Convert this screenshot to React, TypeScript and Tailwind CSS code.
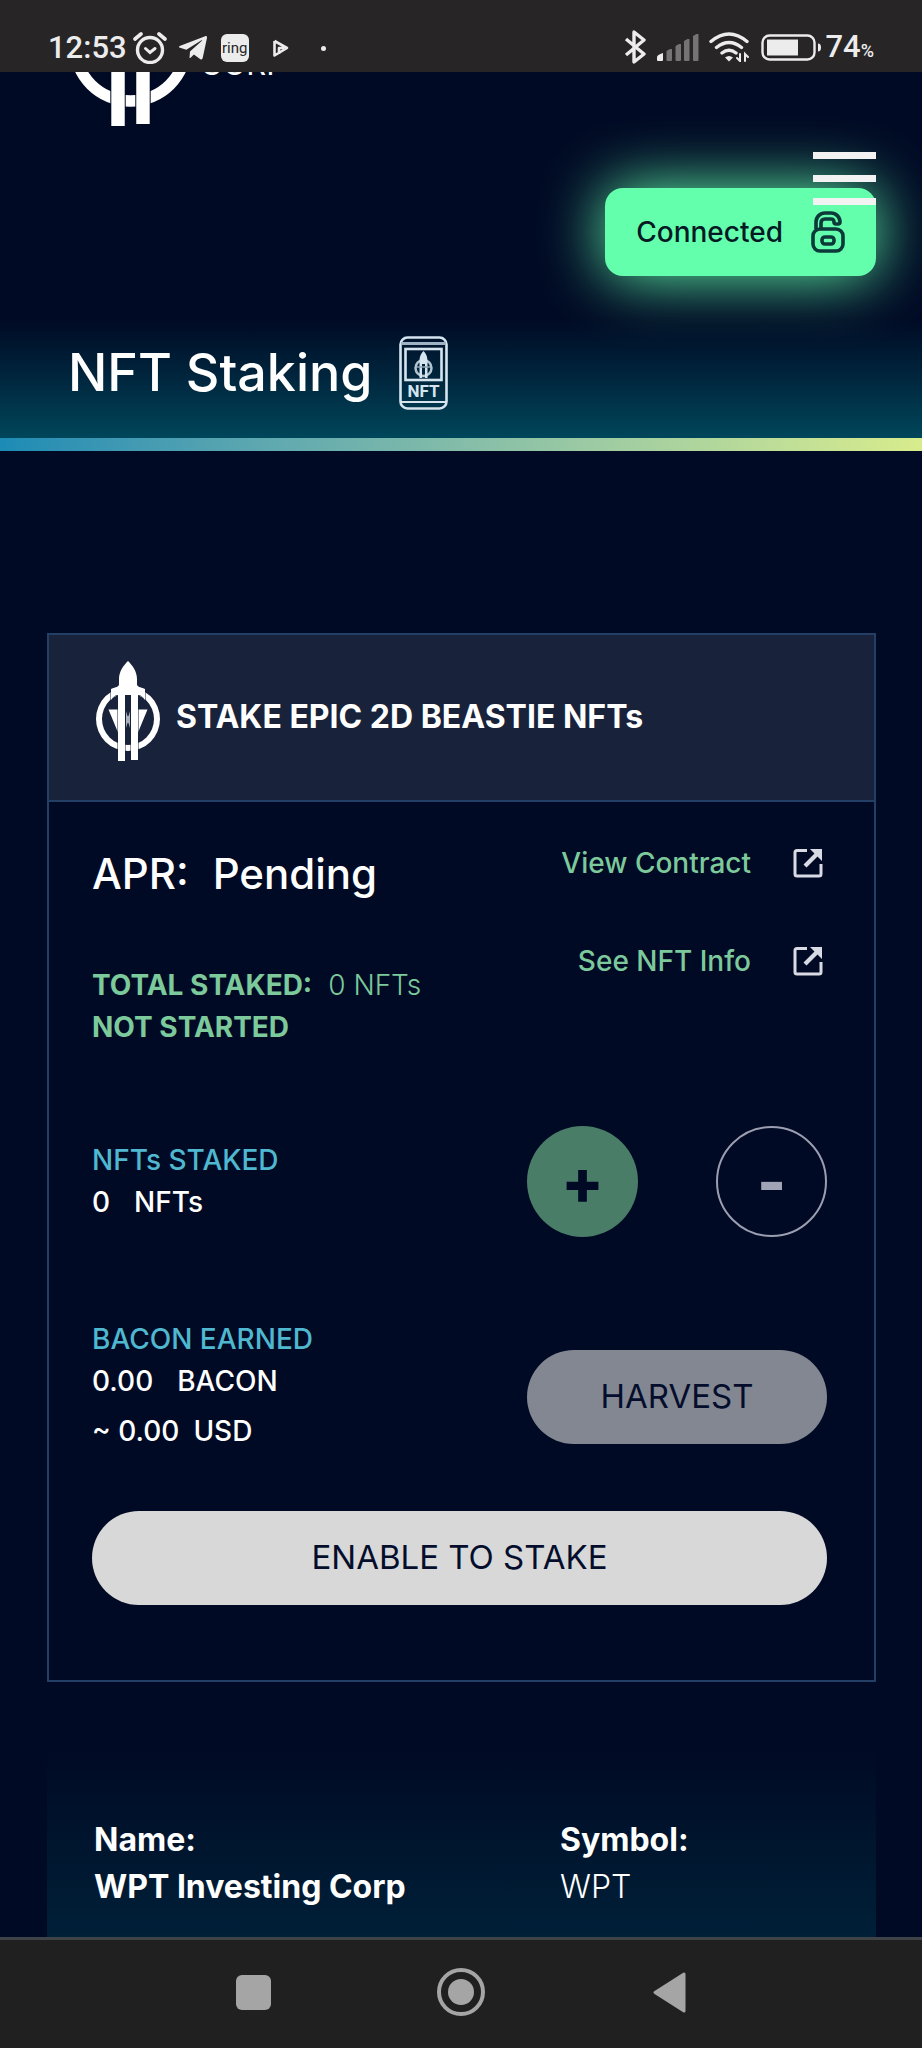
import { useState } from 'react';
import { FaTelegramPlane } from 'react-icons/fa';

const INFO = [
  { label: 'Name:', value: 'WPT Investing Corp', strong: true },
  { label: 'Symbol:', value: 'WPT', strong: false },
];

function RocketLogo({ className, gap }: { className?: string; gap: string }) {
  return (
    <svg viewBox="0 0 64 100" className={className} fill="#fff" aria-hidden="true">
      <path
        fillRule="evenodd"
        d="M32 26a32 32 0 1 1 0 64 32 32 0 0 1 0-64zm0 6a26 26 0 1 0 0 52 26 26 0 0 0 0-52z"
      />
      <path d="M12.500 48.500H22v23zM51.500 48.500H42v23z" />
      {/* keeps a thin dark line between the rocket and the ring */}
      <g fill={gap} stroke={gap} strokeWidth="1">
        <path d="M15 39V28c5-2 8-2 8-5v-5C23 10 28 4 32 0c4 4 9 10 9 18v5c0 3 3 3 8 5v11c-2-3-4-5-7-5H22c-3 0-5 2-7 5z" />
        <path d="M22 33h7v67h-7zM35 33h7v67h-7z" />
        <path d="M29 33h6v17h-6z" />
      </g>
      <path d="M30 50l1.500 5h1L34 50v17l-1.500-5h-1L30 67z" fill="#aab0bd" />
      <path d="M15 39V28c5-2 8-2 8-5v-5C23 10 28 4 32 0c4 4 9 10 9 18v5c0 3 3 3 8 5v11c-2-3-4-5-7-5H22c-3 0-5 2-7 5z" />
      <path d="M22 33h7v67h-7zM35 33h7v66h-7z" />
    </svg>
  );
}

function UnlockIcon() {
  return (
    <svg viewBox="0 0 34 42" className="h-[42px] w-[34px]" fill="none" stroke="#0b3a38" strokeWidth="3.600" strokeLinejoin="round" aria-hidden="true">
      <rect x="2" y="18" width="30" height="22" rx="7" />
      <path d="M5 18v-7a9 9 0 0 1 9-9h6a9 9 0 0 1 9 9q0 2-2 2h-2q-2 0-2-2 0-3-3-3h-6q-4 0-4 4v6" />
      <rect x="11" y="26" width="12" height="7" rx="3" />
    </svg>
  );
}

function NftCardIcon() {
  return (
    <svg viewBox="0 0 49 74" className="h-[74px] w-[49px]" fill="none" stroke="#d5e4ee" aria-hidden="true">
      <rect x="1.500" y="1.500" width="46" height="71" rx="7" strokeWidth="2.600" />
      <path d="M2 7.500h45" strokeWidth="3" stroke="#9fb3c4" />
      <path d="M2 66h45" strokeWidth="2" />
      <rect x="6.500" y="13" width="36" height="31" strokeWidth="2.600" />
      <circle cx="24.500" cy="32" r="8" strokeWidth="2.500" stroke="#b4c5d2" />
      <path d="M24.500 15c-4 4-4 8-4 12v15h2.500V28h3v14h2.500V27c0-4 0-8-4-12z" fill="#d5e4ee" stroke="none" />
      <path d="M18 31h13" strokeWidth="1.500" stroke="#8ea5b5" />
      <text x="24.500" y="61" textAnchor="middle" fontSize="17" fontWeight="700" fontFamily="Roboto, sans-serif" fill="#d5e4ee" stroke="none">
        NFT
      </text>
    </svg>
  );
}

function ExternalIcon() {
  return (
    <svg viewBox="0 0 30 30" className="h-[30px] w-[30px]" aria-hidden="true">
      <path d="M14 2.500H4q-2 0-2 2V26q0 2 2 2h22q2 0 2-2V16" fill="none" stroke="#d9dbe4" strokeWidth="3" />
      <path d="M17 1h12v12l-4.500-4.500L13.500 19.500l-3-3L21.500 5.500z" fill="#d9dbe4" />
    </svg>
  );
}

function StatusBar() {
  return (
    <div className="relative z-10 flex h-18 items-end justify-between bg-[#272526] px-12 pb-2 font-[Roboto,sans-serif] text-[#ececec]">
      <div className="flex items-center">
        <span className="text-[31px] leading-8 font-medium">12:53</span>
        <svg viewBox="0 0 34 32" className="ml-[6px] h-8 w-[34px]" fill="none" stroke="#ececec" strokeLinecap="round" aria-hidden="true">
          <circle cx="17" cy="18" r="12.500" strokeWidth="3.400" />
          <path d="M2 7l6-5M32 7l-6-5" strokeWidth="3.600" />
          <path d="M12.500 16.500l4.500 4 5-4" strokeWidth="3" />
        </svg>
        <FaTelegramPlane className="ml-3 h-8 w-7" />
        <span className="ml-[14px] flex h-7 w-7 items-center justify-center rounded-md bg-[#ececec] text-[15px] leading-7 text-[#272526]">
          ring
        </span>
        <svg viewBox="0 0 16 18" className="ml-6 h-[18px] w-4" fill="none" stroke="#ececec" strokeWidth="2.600" aria-hidden="true">
          <path d="M1.500 2v14.500L14 9 1.500 2M6 15V9h5" strokeLinejoin="round" />
        </svg>
        <span className="ml-8 h-[5px] w-[5px] rounded-full bg-[#ececec]" />
      </div>
      <div className="flex items-center">
        <svg viewBox="0 0 22 34" className="h-[34px] w-[22px]" fill="none" stroke="#ececec" strokeWidth="3.400" strokeLinejoin="round" aria-hidden="true">
          <path d="M2 9l18 15-10 8V2l10 8L2 25" />
        </svg>
        <svg viewBox="0 0 42 28" className="ml-[11px] h-7 w-[42px]" fill="#757374" aria-hidden="true">
          <path d="M0 27v-3q0-2 6-4v7q0 1-1 1H1q-1 0-1-1z" fill="#ececec" />
          <path d="M9.500 27V18l3.500-2 2 0v11q0 1-1 1h-3.500q-1 0-1-1zM18.500 27V13l3.500-2 2 0v16q0 1-1 1h-3.500q-1 0-1-1zM27 27V8l3.500-2 2 0v21q0 1-1 1H28q-1 0-1-1zM36 27V3l3.500-2 2 0v26q0 1-1 1H37q-1 0-1-1z" />
        </svg>
        <svg viewBox="0 0 40 30" className="ml-[10px] h-[30px] w-10" fill="none" stroke="#ececec" strokeWidth="3.400" strokeLinecap="round" aria-hidden="true">
          <path d="M2 9.500Q20-5.500 38 9.500M7.500 15.500q12.500-10 25 0M13 21q7-5.500 14 0" />
          <path d="M16 25.500q4-3 8 0l-4 4z" fill="#ececec" stroke="none" />
          <path d="M31 22v7l-3-3M36 29v-7l3 3" strokeWidth="2" />
        </svg>
        <svg viewBox="0 0 60 27" className="ml-3 h-[27px] w-[60px]" aria-hidden="true">
          <rect x="1.500" y="1.500" width="52" height="24" rx="7" fill="none" stroke="#ececec" strokeWidth="2.400" />
          <rect x="6" y="5.500" width="31" height="16" fill="#ececec" />
          <path d="M57 9.500q3 0 3 4t-3 4z" fill="#ececec" />
        </svg>
        <span className="ml-1 text-[31px] leading-8 font-medium">
          74<span className="text-[18px] leading-none">%</span>
        </span>
      </div>
    </div>
  );
}

function NavBar() {
  return (
    <nav className="flex h-[111px] items-center justify-center border-t-[3px] border-[#3f4347] bg-[#202020] pb-1">
      <button type="button" aria-label="Recent apps" className="flex h-12 w-12 items-center justify-center">
        <span className="h-[35px] w-[35px] rounded-md bg-[#a5a5a5]" />
      </button>
      <button type="button" aria-label="Home" className="mx-40 flex h-12 w-12 items-center justify-center rounded-full border-4 border-[#a5a5a5]">
        <span className="h-[26px] w-[26px] rounded-full bg-[#a5a5a5]" />
      </button>
      <button type="button" aria-label="Back" className="flex h-12 w-12 items-center justify-center">
        <svg viewBox="0 0 33 41" className="h-[41px] w-[33px]" fill="#a5a5a5" stroke="#a5a5a5" strokeWidth="3" strokeLinejoin="round" aria-hidden="true">
          <path d="M31 2v37L2 20.500z" />
        </svg>
      </button>
    </nav>
  );
}

export default function App() {
  const [menuOpen, setMenuOpen] = useState(false);

  return (
    <div className="flex min-h-screen flex-col bg-[#000a24] font-[Inter,sans-serif] text-white">
      <StatusBar />

      {/* Header, scrolled partly under the status bar */}
      <header className="relative">
        <div className="flex h-29 items-start px-[69px]">
          <RocketLogo gap="#000a24" className="-mt-[138px] h-[192px] w-[123px]" />
          <span className="-mt-7 ml-2 text-[31px] leading-10">CORP</span>
        </div>
        <div className="flex justify-end px-[46px] pb-11">
          <button
            type="button"
            className="flex h-22 items-center gap-7 rounded-[18px] bg-[#64ffad] px-[31px] text-[28px] font-medium text-[#031a24] shadow-[0_0_64px_#64ffad]"
          >
            Connected
            <UnlockIcon />
          </button>
        </div>
        <button
          type="button"
          aria-label="Menu"
          aria-expanded={menuOpen}
          onClick={() => setMenuOpen(!menuOpen)}
          className="absolute top-20 right-[46px] flex flex-col gap-4"
        >
          <span className="h-[7px] w-[63px] bg-[#f2f2f2]" />
          <span className="h-[7px] w-[63px] bg-[#f2f2f2]" />
          <span className="h-[7px] w-[63px] bg-[#f2f2f2]" />
        </button>
      </header>

      <div className="flex h-[118px] items-center gap-[26px] bg-gradient-to-b from-[#000a24] to-[#00465a] px-17 pb-3">
        <h1 className="text-[52px] leading-16 font-medium">NFT Staking</h1>
        <NftCardIcon />
      </div>
      <div className="h-[13px] bg-gradient-to-r from-[#1b8bb5] to-[#d8ec8c]" />

      <main className="flex flex-1 flex-col pt-[182px] pr-[46px] pl-[47px]">
        <section className="border-2 border-[#233f66]">
          <div className="flex h-[167px] items-center gap-4 border-b-2 border-[#233f66] bg-[#18233b] px-[47px] pb-[14px]">
            <RocketLogo gap="#18233b" className="h-[100px] w-16" />
            <h2 className="pt-3 text-[32px] leading-10 font-bold">STAKE EPIC 2D BEASTIE NFTs</h2>
          </div>

          <div className="pt-9 pr-[47px] pb-[75px] pl-[43px]">
            <div className="flex justify-between">
              <div>
                <p className="flex gap-6 pt-2 text-[42px] leading-14 font-medium">
                  <span>APR:</span>
                  <span>Pending</span>
                </p>
                <p className="mt-[62px] flex gap-4 text-[28px] leading-[42px] text-[#7cc99b]">
                  <span className="font-bold">TOTAL STAKED:</span>
                  <span className="font-light">0 NFTs</span>
                </p>
                <p className="text-[28px] leading-[42px] font-bold text-[#7cc99b]">NOT STARTED</p>
              </div>
              <div className="flex flex-col items-end gap-14 pt-1 pr-1 text-[28px] leading-[42px] font-medium text-[#7cc99b]">
                <a href="#contract" className="flex items-center gap-[42px]">
                  View Contract
                  <ExternalIcon />
                </a>
                <a href="#nft-info" className="flex items-center gap-[42px]">
                  See NFT Info
                  <ExternalIcon />
                </a>
              </div>
            </div>

            <div className="mt-[78px] flex items-center justify-between">
              <div className="pb-[2px] text-[28px] leading-[42px] font-medium">
                <p className="text-[#4fb8d0]">NFTs STAKED</p>
                <p className="flex gap-6">
                  <span>0</span>
                  <span>NFTs</span>
                </p>
              </div>
              <div className="flex w-[300px] justify-between">
                <button type="button" aria-label="Stake" className="h-[111px] w-[111px] rounded-full bg-[#4a7d68] text-[62px] leading-none font-extrabold text-[#000a24]">
                  +
                </button>
                <button type="button" aria-label="Unstake" className="h-[111px] w-[111px] rounded-full border-2 border-[#9b9eb0] text-[62px] leading-none font-extrabold text-[#a1a4b5]">
                  -
                </button>
              </div>
            </div>

            <div className="mt-[81px] flex items-end justify-between">
              <div className="text-[28px] leading-[42px] font-medium">
                <p className="text-[#4fb8d0]">BACON EARNED</p>
                <p className="flex gap-6">
                  <span>0.00</span>
                  <span>BACON</span>
                </p>
                <p className="mt-2 flex gap-[14px]">
                  <span>~ 0.00</span>
                  <span>USD</span>
                </p>
              </div>
              <button type="button" className="mb-2 h-[94px] w-[300px] rounded-full bg-[#838791] text-[33px] text-[#040e2c]">
                HARVEST
              </button>
            </div>

            <button type="button" className="mt-[59px] h-[94px] w-full rounded-full bg-[#d8d8d8] text-[33px] text-[#040e2c]">
              ENABLE TO STAKE
            </button>
          </div>
        </section>

        <section className="mt-[68px] flex-1 bg-gradient-to-b from-[#000a24] to-[#002038] px-[47px] pt-[66px]">
          <dl className="flex text-[32px] leading-[47px]">
            {INFO.map(item => (
              <div key={item.label} className="basis-[466px] last:basis-auto">
                <dt className="font-bold">{item.label}</dt>
                <dd className={item.strong ? 'font-bold' : 'font-light'}>{item.value}</dd>
              </div>
            ))}
          </dl>
        </section>
      </main>

      <NavBar />
    </div>
  );
}
